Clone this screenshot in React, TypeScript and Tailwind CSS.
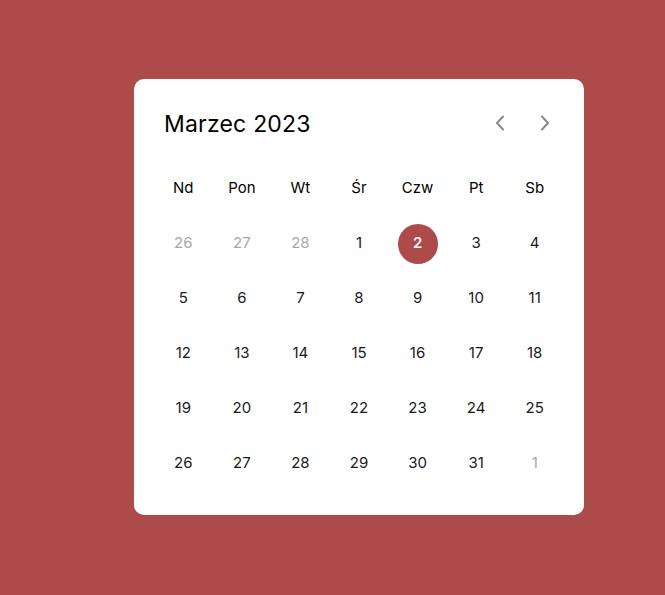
import React from "react";

const weekdays = ["Nd", "Pon", "Wt", "Śr", "Czw", "Pt", "Sb"];
type D = { n: number; muted?: boolean; sel?: boolean };
const days: D[] = [
  { n: 26, muted: true }, { n: 27, muted: true }, { n: 28, muted: true },
  ...Array.from({ length: 31 }, (_, i) => ({ n: i + 1, sel: i + 1 === 2 })),
  { n: 1, muted: true },
];

function Chevron({ dir }: { dir: "l" | "r" }) {
  return (
    <svg width="10" height="16" viewBox="0 0 10 16" fill="none">
      <polyline
        points={dir === "l" ? "8,1.5 2,8 8,14.5" : "2,1.5 8,8 2,14.5"}
        stroke="#8a8a8a"
        strokeWidth="2"
        strokeLinecap="round"
        strokeLinejoin="round"
      />
    </svg>
  );
}

export default function App() {
  return (
    <div
      className="min-h-[595px] w-full bg-[#ad4a4a] pt-[79px] pl-[134px]"
      style={{ fontFamily: "Inter, 'Noto Sans', sans-serif" }}
    >
      <div className="w-[450px] rounded-[10px] bg-white pt-[30px] pb-[24px]">
        <div className="flex h-[30px] items-center justify-between pl-[30px] pr-[34px]">
          <div className="text-[23px] leading-none text-black tracking-[0.2px]">Marzec 2023</div>
          <div className="-mt-[2px] flex items-center gap-[35px]">
            <Chevron dir="l" />
            <Chevron dir="r" />
          </div>
        </div>
        <div className="mt-[22px] grid grid-cols-7 px-[20px]">
          {weekdays.map((w) => (
            <div key={w} className="flex h-[55px] items-center justify-center text-[15px] text-black">
              {w}
            </div>
          ))}
          {days.map((d, i) => (
            <div key={i} className="flex h-[55px] items-center justify-center">
              {d.sel ? (
                <div className="flex h-[40px] w-[40px] items-center justify-center rounded-full bg-[#ad4a4a] text-[15px] font-semibold text-white">
                  {d.n}
                </div>
              ) : (
                <span className={"text-[15px] " + (d.muted ? "text-[#a8a8a8]" : "text-[#1a1a1a]")}>{d.n}</span>
              )}
            </div>
          ))}
        </div>
      </div>
    </div>
  );
}
